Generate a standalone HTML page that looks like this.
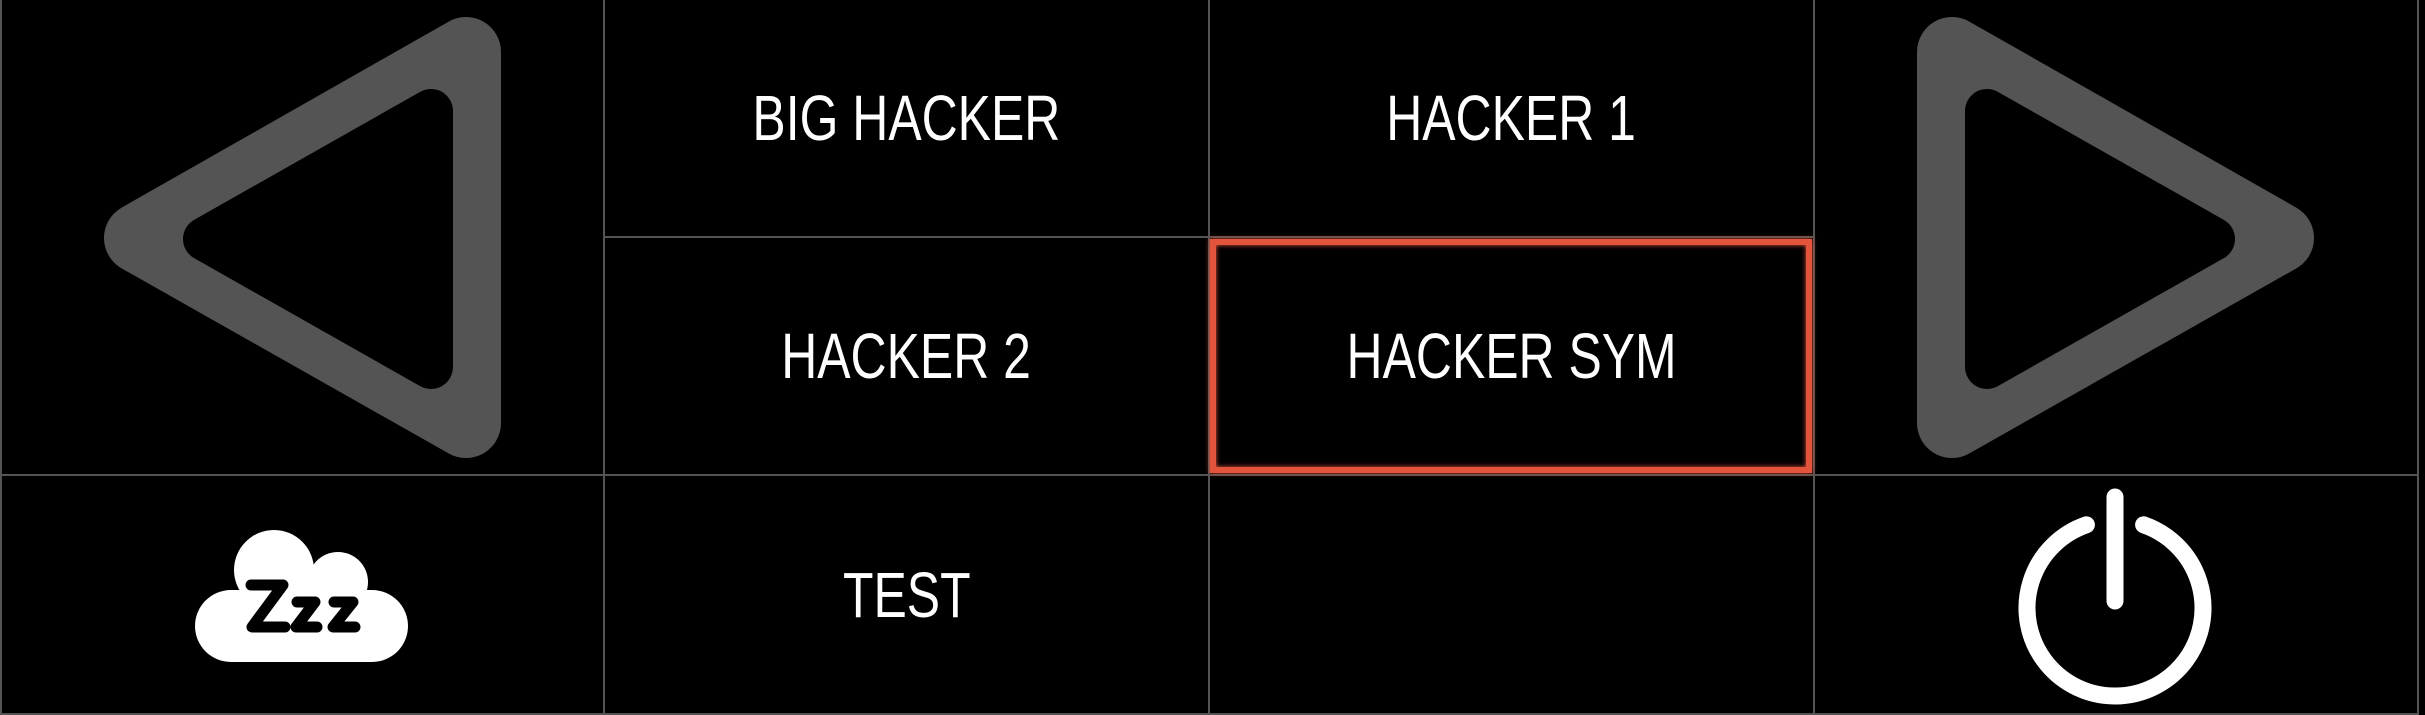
<!DOCTYPE html>
<html><head><meta charset="utf-8"><style>
html,body{margin:0;padding:0;background:#000;}
body{width:2425px;height:715px;position:relative;overflow:hidden;font-family:"Liberation Sans",sans-serif;}
.l{position:absolute;background:#545454;}
.t{position:absolute;display:flex;align-items:center;justify-content:center;color:#fff;font-size:64px;line-height:1;}
.t span{display:inline-block;transform:scaleX(0.78);white-space:nowrap;}
.sel{position:absolute;left:1210px;top:239px;width:590px;height:222px;border:6px solid #e2553c;box-shadow:0 0 5px #e2553c, inset 0 0 5px #e2553c;}
</style></head><body>
<div class="l" style="left:0;top:0;width:2px;height:715px"></div>
<div class="l" style="left:603px;top:0;width:2px;height:715px"></div>
<div class="l" style="left:1208px;top:0;width:2px;height:715px"></div>
<div class="l" style="left:1813px;top:0;width:2px;height:715px"></div>
<div class="l" style="left:2417px;top:0;width:2px;height:715px"></div>
<div class="l" style="left:603px;top:236px;width:1212px;height:2px"></div>
<div class="l" style="left:0;top:474px;width:2419px;height:2px"></div>
<div class="l" style="left:0;top:713px;width:2419px;height:2px"></div>

<div class="sel"></div>

<div class="t" style="left:605px;top:0;width:603px;height:236px"><span>BIG HACKER</span></div>
<div class="t" style="left:1210px;top:0;width:603px;height:236px"><span>HACKER 1</span></div>
<div class="t" style="left:605px;top:238px;width:603px;height:236px"><span>HACKER 2</span></div>
<div class="t" style="left:1210px;top:238px;width:603px;height:236px"><span>HACKER SYM</span></div>
<div class="t" style="left:605px;top:476px;width:603px;height:237px"><span>TEST</span></div>

<svg width="2425" height="715" style="position:absolute;left:0;top:0" xmlns="http://www.w3.org/2000/svg">
<defs>
<g id="tri" stroke-linejoin="round">
<polygon points="1952,52 1952,423 2279,238" fill="#545454" stroke="#545454" stroke-width="70"/>
<polygon points="1987,111 1987,367 2213,239" fill="#000" stroke="#000" stroke-width="44"/>
</g>
</defs>
<use href="#tri"/>
<use href="#tri" transform="translate(2418,0) scale(-1,1)"/>
<g fill="#fff">
<rect x="195" y="590" width="213" height="72" rx="36"/>
<circle cx="274" cy="570" r="40"/>
<circle cx="338" cy="582" r="30"/>
<rect x="240" y="585" width="110" height="30"/>
</g>
<g fill="none" stroke="#000" stroke-width="11" stroke-linecap="round" stroke-linejoin="round">
<path d="M251,585 H283 L252,627 H285"/>
<path d="M297,602 H315 L296,627 H317"/>
<path d="M334,602 H353 L333,627 H355"/>
</g>
<g fill="none" stroke="#fff" stroke-width="17" stroke-linecap="round">
<path d="M2086.4,524.8 A88,88 0 1 0 2143.6,524.8"/>
<line x1="2115" y1="497" x2="2115" y2="601"/>
</g>
</svg>
</body></html>
